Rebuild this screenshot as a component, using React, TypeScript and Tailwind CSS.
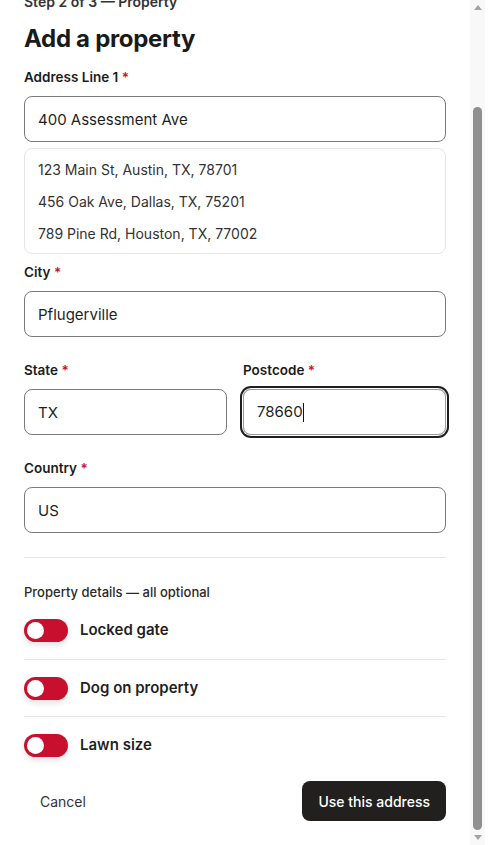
const suggestions = [
  '123 Main St, Austin, TX, 78701',
  '456 Oak Ave, Dallas, TX, 75201',
  '789 Pine Rd, Houston, TX, 77002',
]

const details = ['Locked gate', 'Dog on property', 'Lawn size']

function Label({ text }: { text: string }) {
  return (
    <label className="block text-[13.5px] leading-5 font-semibold text-[#1c1c1c]">
      {text} <span className="text-[#c8102e]">*</span>
    </label>
  )
}

function Field({ value }: { value: string }) {
  return (
    <input
      readOnly
      value={value}
      className="mt-[9px] block w-full h-[46px] px-[13px] rounded-lg border border-[#7a7a7a] bg-white text-[15px] text-[#1f1f1f] outline-none"
    />
  )
}

function Toggle() {
  return (
    <div className="w-11 h-[23px] rounded-full bg-[#c8102e] p-[3px] flex items-center shadow-[0_3px_6px_rgba(0,0,0,0.12)]">
      <div className="w-[17px] h-[17px] rounded-full bg-white" />
    </div>
  )
}

// the panel is scrolled to its end; this mimics the classic scrollbar beside it
function Scrollbar() {
  return (
    <div className="w-[15px] h-full flex flex-col bg-[#f8f8f8]">
      <div className="h-[15px] flex items-center justify-center">
        <svg width="8" height="5" viewBox="0 0 8 5">
          <polygon points="4,0 8,5 0,5" fill="#a3a3a3" />
        </svg>
      </div>
      <div className="flex-1" />
      <div className="h-[723px] px-[3px]">
        <div className="h-full rounded-full bg-[#8f8f8f]" />
      </div>
      <div className="h-[15px] flex items-center justify-center">
        <svg width="8" height="5" viewBox="0 0 8 5">
          <polygon points="0,0 8,0 4,5" fill="#a3a3a3" />
        </svg>
      </div>
    </div>
  )
}

export default function App() {
  return (
    <div className="w-[500px] h-[845px] bg-white flex font-['Inter',sans-serif] text-[#1f1f1f]">
      <div className="w-[470px] h-full overflow-hidden flex flex-col justify-end">
        <div className="shrink-0 px-6 pb-6">
          <p className="text-[14px] leading-5 font-semibold text-[#333]">Step 2 of 3 — Property</p>
          <h1 className="mt-[11px] text-[24px] leading-8 font-bold tracking-[-0.3px] text-[#1a1a1a]">
            Add a property
          </h1>

          {/* Address */}
          <div className="mt-3">
            <Label text="Address Line 1" />
            <Field value="400 Assessment Ave" />
            <div className="mt-1.5 rounded-lg border border-[#e6e6e6] py-1">
              {suggestions.map((s) => (
                <div key={s} className="h-8 flex items-center px-[13px] text-[14px] text-[#333]">
                  {s}
                </div>
              ))}
            </div>
          </div>

          <div className="mt-2">
            <Label text="City" />
            <Field value="Pflugerville" />
          </div>

          <div className="mt-[23px] grid grid-cols-2 gap-4">
            <div>
              <Label text="State" />
              <Field value="TX" />
            </div>
            <div>
              <Label text="Postcode" />
              <div className="mt-[9px] h-[46px] px-[13px] rounded-lg border border-[#9a9a9a] ring-2 ring-[#1f1f1f] ring-offset-1 flex items-center text-[15px] text-[#1f1f1f]">
                78660<span className="inline-block w-px h-[19px] bg-[#111]" />
              </div>
            </div>
          </div>

          <div className="mt-[23px]">
            <Label text="Country" />
            <Field value="US" />
          </div>

          <div className="mt-6 border-t border-[#e6e6e6]" />

          {/* Optional details */}
          <p className="mt-6 text-[13px] leading-5 font-medium text-[#2a2a2a]">
            Property details — all optional
          </p>
          <div>
            {details.map((d, i) => (
              <div
                key={d}
                className={`h-[57px] flex items-center gap-3 ${i > 0 ? 'border-t border-[#e6e6e6]' : ''}`}
              >
                <Toggle />
                <span className="text-[15px] font-semibold text-[#1f1f1f]">{d}</span>
              </div>
            ))}
          </div>

          {/* Footer */}
          <div className="mt-2 flex items-center justify-between">
            <button className="h-10 px-4 rounded-lg text-[14px] text-[#333]">Cancel</button>
            <button className="h-10 px-4 rounded-lg bg-[#22201e] text-[14px] font-medium text-white">
              Use this address
            </button>
          </div>
        </div>
      </div>
      <Scrollbar />
    </div>
  )
}
